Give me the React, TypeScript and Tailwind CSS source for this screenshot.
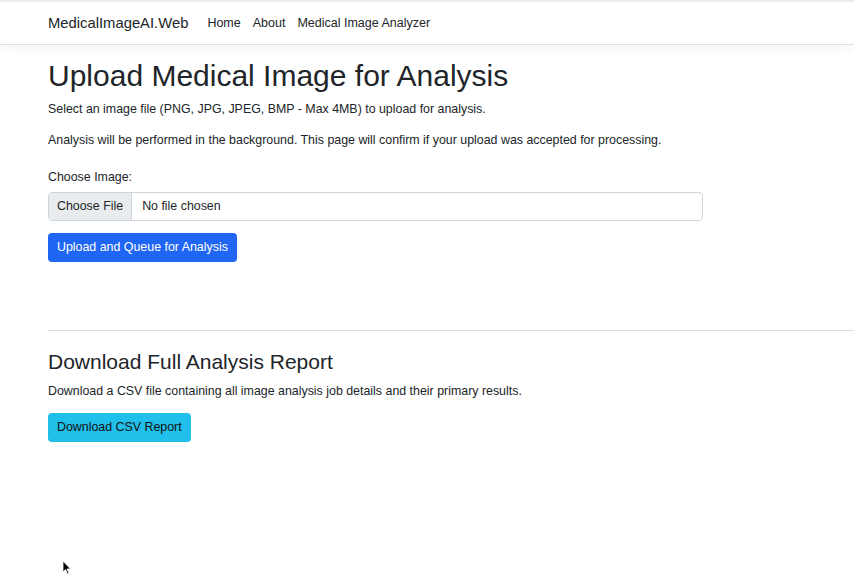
import React from "react";

export default function App() {
  const font = { fontFamily: '"Liberation Sans", Arial, sans-serif' };
  return (
    <div className="relative w-[854px] h-[583px] overflow-hidden bg-white text-[#212529]" style={font}>
      <div className="h-[2px] bg-[#efefef]" />
      <nav className="h-[43px] bg-white border-b border-[#dfdfdf] shadow-[0_3px_10px_rgba(0,0,0,0.05)] flex items-center pl-[48px]">
        <span className="text-[14.8px] mr-[19px]">MedicalImageAI.Web</span>
        <div className="flex gap-[12px] text-[12.5px]">
          <span>Home</span>
          <span>About</span>
          <span>Medical Image Analyzer</span>
        </div>
      </nav>
      <main className="pl-[48px]">
        <h1 className="text-[30px] leading-[36px] font-medium mt-[13px] mb-[6px]">Upload Medical Image for Analysis</h1>
        <p className="text-[12.4px] leading-[19px]">Select an image file (PNG, JPG, JPEG, BMP - Max 4MB) to upload for analysis.</p>
        <p className="text-[12.4px] leading-[19px] mt-[12px]">Analysis will be performed in the background. This page will confirm if your upload was accepted for processing.</p>
        <div className="mt-[18px] text-[12.4px] leading-[19px]">Choose Image:</div>
        <div className="mt-[5px] w-[655px] h-[29px] border border-[#ced4da] rounded-[4px] flex items-center text-[12.4px] overflow-hidden">
          <div className="h-full bg-[#e9ecef] border-r border-[#ced4da] px-[8px] flex items-center">Choose File</div>
          <div className="pl-[10px]">No file chosen</div>
        </div>
        <button className="mt-[12px] h-[29px] px-[9px] bg-[#1f66f4] text-white text-[12.4px] rounded-[4px]">Upload and Queue for Analysis</button>
        <hr className="mt-[68px] border-0 border-t border-[#dcdcdc]" />
        <h2 className="text-[21px] leading-[26px] font-medium mt-[18px]">Download Full Analysis Report</h2>
        <p className="text-[12.4px] leading-[19px] mt-[7px]">Download a CSV file containing all image analysis job details and their primary results.</p>
        <button className="mt-[12px] h-[29px] px-[9px] bg-[#20c0ea] text-[#111] text-[12.4px] rounded-[4px]">Download CSV Report</button>
      </main>
      <svg className="absolute left-[62px] top-[560px]" width="10" height="15" viewBox="0 0 10 15">
        <path d="M1 1 L1 12 L3.5 9.5 L5.5 14 L7 13.3 L5 9 L8.5 9 Z" fill="#000" stroke="#fff" strokeWidth="0.8" />
      </svg>
    </div>
  );
}
